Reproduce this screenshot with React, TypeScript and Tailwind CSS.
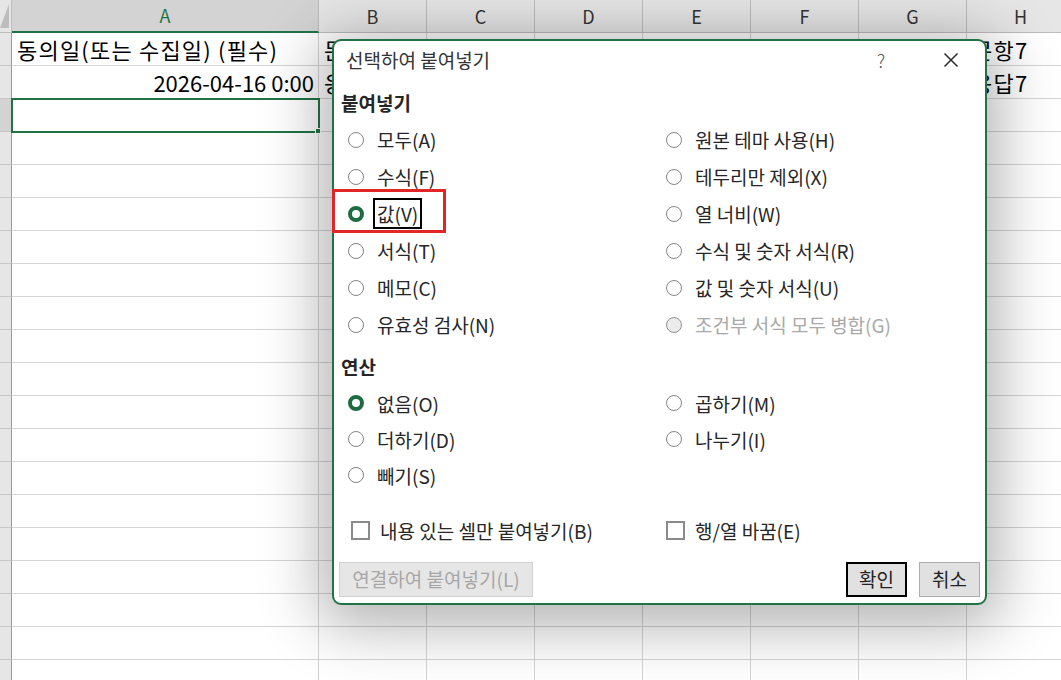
import React from 'react';

const FONT = '"Noto Sans CJK KR", "Liberation Sans", sans-serif';

const columns = [
  { key: 'A', width: 307 },
  { key: 'B', width: 108 },
  { key: 'C', width: 108 },
  { key: 'D', width: 108 },
  { key: 'E', width: 108 },
  { key: 'F', width: 108 },
  { key: 'G', width: 108 },
  { key: 'H', width: 108 },
];

const ROW_COUNT = 20;

const cellText: Record<string, { text: string; align?: 'left' | 'right'; tracking?: boolean }> = {
  '1A': { text: '동의일(또는 수집일) (필수)', tracking: true },
  '2A': { text: '2026-04-16 0:00', align: 'right' },
  '1B': { text: '문항1', tracking: true },
  '2B': { text: '응답1', tracking: true },
  '1H': { text: '문항7', tracking: true },
  '2H': { text: '응답7', tracking: true },
};

const pasteOptions: { label: string; checked?: boolean; disabled?: boolean; focused?: boolean }[][] = [
  [{ label: '모두(A)' }, { label: '원본 테마 사용(H)' }],
  [{ label: '수식(F)' }, { label: '테두리만 제외(X)' }],
  [{ label: '값(V)', checked: true, focused: true }, { label: '열 너비(W)' }],
  [{ label: '서식(T)' }, { label: '수식 및 숫자 서식(R)' }],
  [{ label: '메모(C)' }, { label: '값 및 숫자 서식(U)' }],
  [{ label: '유효성 검사(N)' }, { label: '조건부 서식 모두 병합(G)', disabled: true }],
];

const operationOptions: { label: string; checked?: boolean }[][] = [
  [{ label: '없음(O)', checked: true }, { label: '곱하기(M)' }],
  [{ label: '더하기(D)' }, { label: '나누기(I)' }],
  [{ label: '빼기(S)' }],
];

function RadioDot({ checked, disabled }: { checked?: boolean; disabled?: boolean }) {
  if (checked) {
    return <span className="block w-[16px] h-[16px] shrink-0 rounded-full border-[4.5px] border-[#1e6b41] bg-white" />;
  }
  return (
    <span
      className={`block w-[16px] h-[16px] shrink-0 rounded-full border-[1.5px] ${
        disabled ? 'border-[#8f8f8f] bg-[#ececec]' : 'border-[#858585] bg-white'
      }`}
    />
  );
}

function RadioRow({ label, checked, disabled, focused, height }: {
  label: string;
  checked?: boolean;
  disabled?: boolean;
  focused?: boolean;
  height: string;
}) {
  return (
    <div className={`flex items-center gap-[13px] ${height}`}>
      <RadioDot checked={checked} disabled={disabled} />
      <span
        className={`text-[19px] leading-none ${disabled ? 'text-[#a8a8a8]' : 'text-[#262626]'} ${
          focused ? '-ml-[4px] px-[2px] py-[4px] border-2 border-black' : ''
        }`}
      >
        {label}
      </span>
    </div>
  );
}

function Checkbox({ label }: { label: string }) {
  return (
    <div className="flex items-center gap-[10px] h-[30px]">
      <span className="block w-[19px] h-[19px] border-2 border-[#8a8a8a] bg-white" />
      <span className="text-[19px] leading-none text-[#262626]">{label}</span>
    </div>
  );
}

function SelectAllCorner() {
  return (
    <svg width="12" height="33" viewBox="0 0 12 33" className="block">
      <polygon points="9,4 9,28 0,28" fill="#bdbdbd" />
    </svg>
  );
}

function Sheet() {
  return (
    <div className="flex flex-col">
      {/* column headers */}
      <div className="flex h-[33px]">
        <div className="w-[12px] shrink-0 h-[33px] bg-[#e6e6e6] border-r border-b border-[#bcbcbc] overflow-hidden">
          <SelectAllCorner />
        </div>
        {columns.map((col) => {
          const active = col.key === 'A';
          return (
            <div
              key={col.key}
              style={{ width: col.width }}
              className={`shrink-0 h-[33px] flex items-center justify-center text-[18px] border-r ${
                active
                  ? 'bg-[#d3d3d3] text-[#217346] border-b-2 border-b-[#217346] border-r-[#bcbcbc]'
                  : 'bg-[#e6e6e6] text-[#333] border-b border-[#bcbcbc]'
              }`}
            >
              {col.key}
            </div>
          );
        })}
      </div>
      {Array.from({ length: ROW_COUNT }, (_, i) => {
        const row = i + 1;
        return (
          <div key={row} className="flex h-[33px]">
            <div
              className={`w-[12px] shrink-0 border-r border-r-[#9c9c9c] border-b border-b-[#c6c6c6] ${
                row === 3 ? 'bg-[#d3d3d3]' : 'bg-[#e6e6e6]'
              }`}
            />
            {columns.map((col) => {
              const cell = cellText[`${row}${col.key}`];
              return (
                <div
                  key={col.key}
                  style={{ width: col.width }}
                  className={`shrink-0 h-[33px] border-r border-b border-[#d4d4d4] flex items-center overflow-visible whitespace-nowrap text-[22px] text-black ${
                    cell?.align === 'right' ? 'justify-end pr-[4px]' : 'pl-[5px]'
                  } ${cell?.tracking ? 'tracking-[1.2px]' : ''}`}
                >
                  {cell?.text}
                </div>
              );
            })}
          </div>
        );
      })}
    </div>
  );
}

function PasteSpecialDialog() {
  return (
    <div className="absolute left-[332px] top-[39px] w-[655px] h-[566px] rounded-[9px] border-2 border-[#217346] bg-white shadow-[0_10px_60px_12px_rgba(0,0,0,0.3)] flex flex-col">
      {/* title bar */}
      <div className="flex items-center h-[38px] pl-[12px] pr-[26px]">
        <span className="text-[19px] text-[#333]">선택하여 붙여넣기</span>
        <span className="ml-auto text-[18px] text-[#555] font-light">?</span>
        <svg width="16" height="16" viewBox="0 0 16 16" className="ml-[58px]">
          <path d="M1.5 1.5 L14.5 14.5 M14.5 1.5 L1.5 14.5" stroke="#2b2b2b" strokeWidth="1.5" />
        </svg>
      </div>

      <div className="mt-[10px] h-[28px] flex items-center pl-[7px] text-[19px] font-bold text-[#262626]">붙여넣기</div>
      <div className="mt-[4px] pl-[14px] flex flex-col">
        {pasteOptions.map((pair, i) => (
          <div key={i} className="grid grid-cols-[318px_1fr]">
            {pair.map((opt) => (
              <RadioRow key={opt.label} {...opt} height="h-[37px]" />
            ))}
          </div>
        ))}
      </div>

      <div className="mt-[10px] h-[28px] flex items-center pl-[7px] text-[19px] font-bold text-[#262626]">연산</div>
      <div className="mt-[4px] pl-[14px] flex flex-col">
        {operationOptions.map((pair, i) => (
          <div key={i} className="grid grid-cols-[318px_1fr]">
            {pair.map((opt) => (
              <RadioRow key={opt.label} {...opt} height="h-[36px]" />
            ))}
          </div>
        ))}
      </div>

      <div className="mt-[22px] pl-[17px] grid grid-cols-[315px_1fr]">
        <Checkbox label="내용 있는 셀만 붙여넣기(B)" />
        <Checkbox label="행/열 바꿈(E)" />
      </div>

      <div className="mt-[17px] flex items-center pl-[5px] pr-[5px]">
        <button
          type="button"
          disabled
          className="w-[194px] h-[35px] bg-[#e6e6e6] border border-[#d2d2d2] text-[19px] text-[#a6a6a6]"
        >
          연결하여 붙여넣기(L)
        </button>
        <button
          type="button"
          className="ml-auto w-[61px] h-[35px] bg-[#e1e1e1] border-[2.5px] border-black text-[19px] text-[#222]"
        >
          확인
        </button>
        <button
          type="button"
          className="ml-[12px] w-[61px] h-[35px] bg-[#e1e1e1] border border-[#adadad] text-[19px] text-[#222]"
        >
          취소
        </button>
      </div>
    </div>
  );
}

export default function App() {
  return (
    <div className="relative w-[1061px] h-[680px] overflow-hidden bg-white" style={{ fontFamily: FONT }}>
      <Sheet />
      {/* active cell A3 */}
      <div className="absolute left-[11px] top-[98px] w-[309px] h-[35px] border-2 border-[#217346]">
        <span className="absolute right-[-3px] bottom-[-3px] w-[6px] h-[6px] bg-[#217346] border border-white" />
      </div>
      <PasteSpecialDialog />
      {/* highlight box */}
      <div className="absolute left-[332px] top-[189px] w-[114px] h-[44px] border-[3px] border-[#e02626]" />
    </div>
  );
}
